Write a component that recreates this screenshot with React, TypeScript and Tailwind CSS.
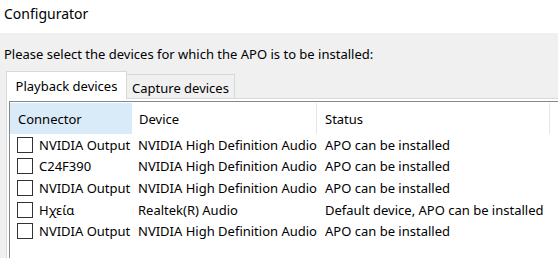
import * as React from 'react';

interface DeviceRow {
  connector: string;
  device: string;
  status: string;
}

const rows: DeviceRow[] = [
  { connector: 'NVIDIA Output', device: 'NVIDIA High Definition Audio', status: 'APO can be installed' },
  { connector: 'C24F390', device: 'NVIDIA High Definition Audio', status: 'APO can be installed' },
  { connector: 'NVIDIA Output', device: 'NVIDIA High Definition Audio', status: 'APO can be installed' },
  { connector: 'Ηχεία', device: 'Realtek(R) Audio', status: 'Default device, APO can be installed' },
  { connector: 'NVIDIA Output', device: 'NVIDIA High Definition Audio', status: 'APO can be installed' },
];

const Row = ({ row }: { row: DeviceRow }) => (
  <div className="flex h-[21.67px] items-center whitespace-nowrap">
    <div className="flex w-[122px] shrink-0 items-center pl-[7px]">
      <span className="h-[16px] w-[16px] shrink-0 border border-[#333333] bg-white" />
      <span className="ml-[6px]">{row.connector}</span>
    </div>
    <div className="w-[185px] shrink-0 pl-[6px]">{row.device}</div>
    <div className="w-[233px] shrink-0 pl-[8px]">{row.status}</div>
  </div>
);

export default function App() {
  return (
    <div className="h-[258px] w-[558px] overflow-hidden bg-[#f0f0f0] font-['Noto_Sans',sans-serif] text-[13px] leading-[20px] text-black">
      <div className="h-[33px] bg-white pl-[4px] pt-[4px] text-[14px]">Configurator</div>
      <div className="pl-[4px] pt-[11px]">
        Please select the devices for which the APO is to be installed:
      </div>

      <div className="ml-[6px] mt-[7px]">
        <div className="flex items-end">
          <div className="relative z-10 -mb-px flex h-[28px] w-[121px] items-center justify-center border border-b-0 border-[#d9d9d9] bg-white">
            Playback devices
          </div>
          <div className="flex h-[24px] w-[108px] items-center justify-center border border-b-0 border-l-0 border-[#d9d9d9] bg-[#f0f0f0] pt-[2px]">
            Capture devices
          </div>
        </div>

        <div className="w-[600px] border border-[#d9d9d9] bg-white p-[2px]">
          <div className="h-[200px] border border-[#828790] bg-white">
            <div className="flex h-[32px] items-stretch whitespace-nowrap pt-px">
              <div className="flex w-[122px] shrink-0 items-center bg-[#d9ebf9] pl-[8px]">Connector</div>
              <div className="flex w-[185px] shrink-0 items-center border-r border-[#e5e5e5] pl-[7px]">Device</div>
              <div className="flex w-[233px] shrink-0 items-center border-r border-[#e5e5e5] pl-[8px]">Status</div>
            </div>
            {rows.map((row, i) => (
              <Row key={i} row={row} />
            ))}
          </div>
        </div>
      </div>
    </div>
  );
}
